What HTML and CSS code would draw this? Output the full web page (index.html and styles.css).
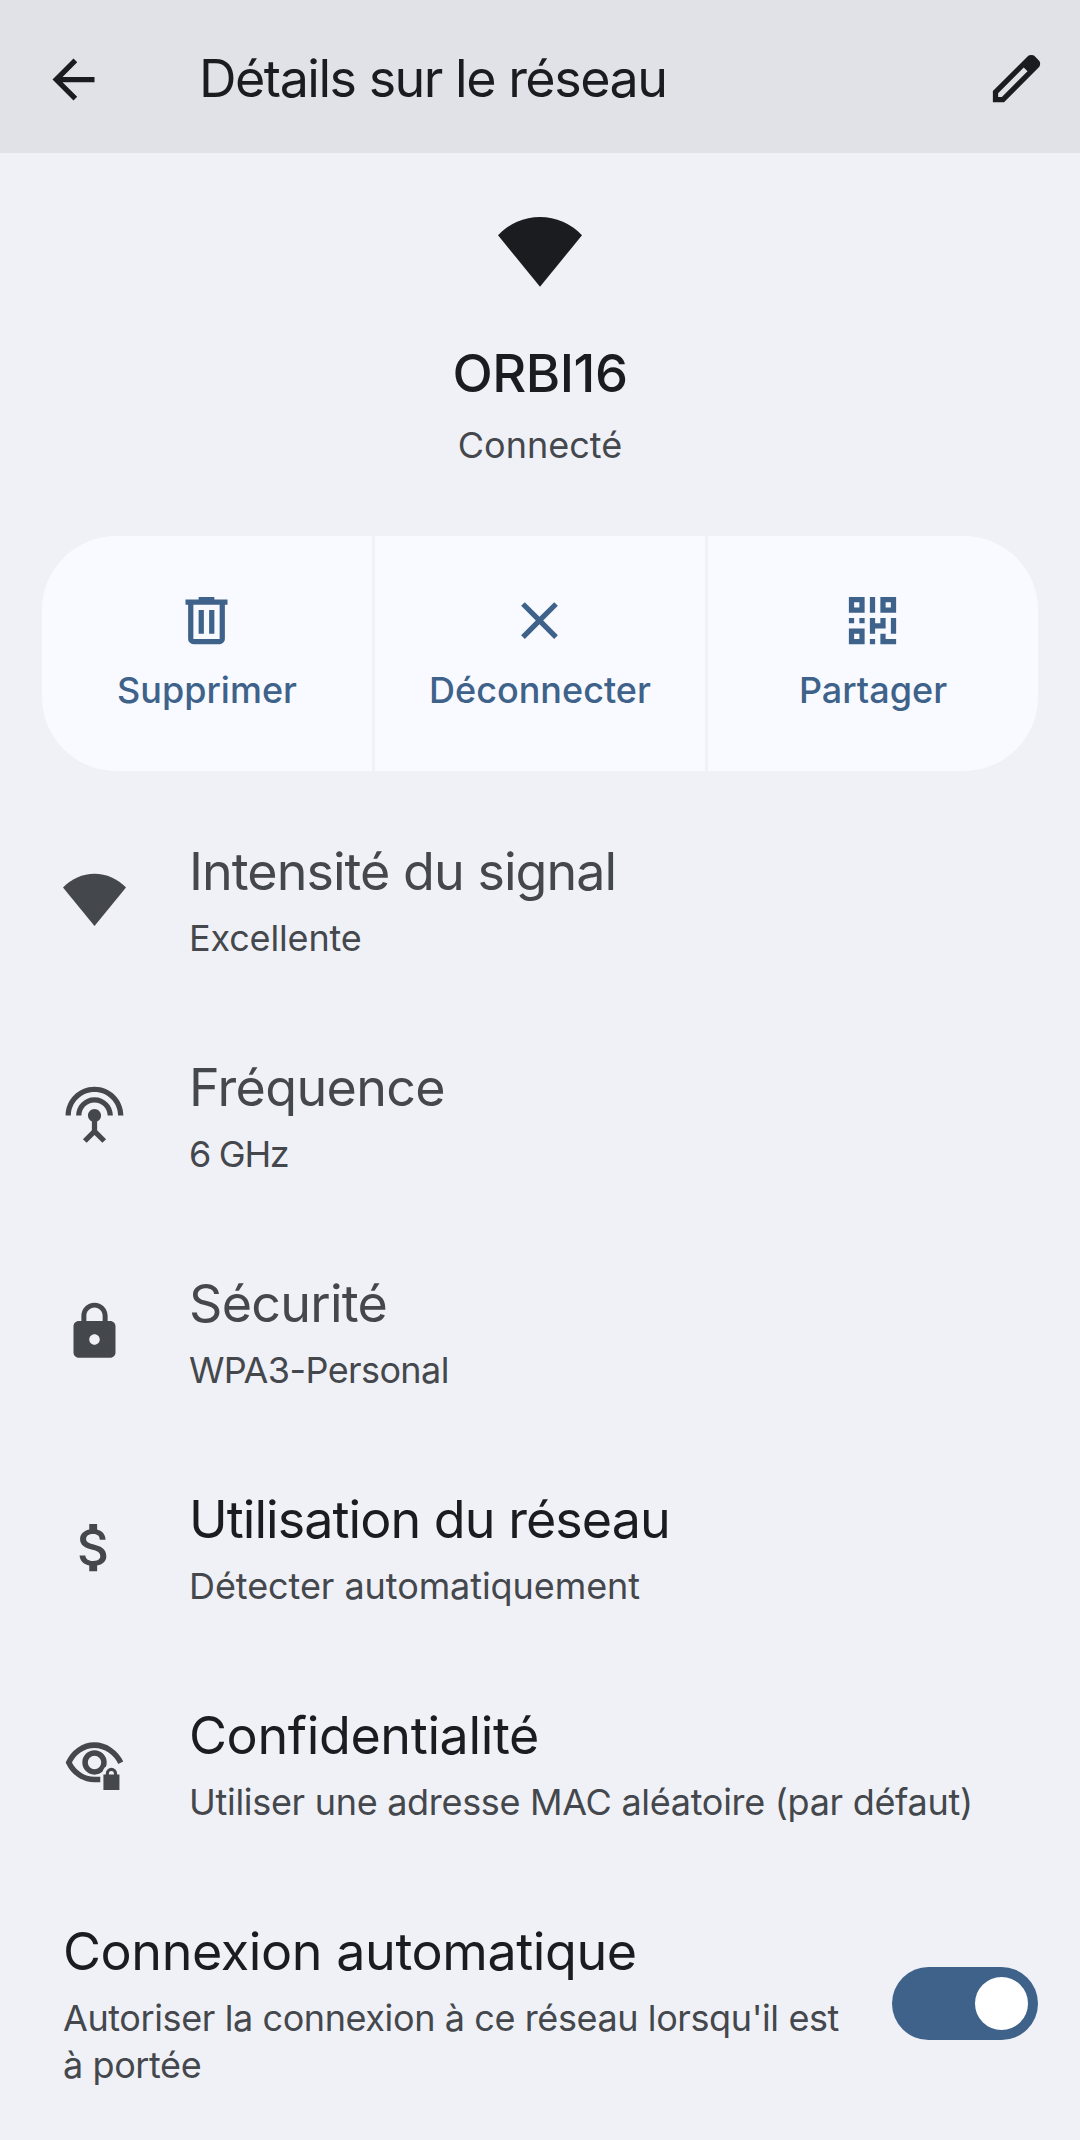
FILE: index.html
```html
<!DOCTYPE html>
<html lang="fr">
<head>
<meta charset="utf-8">
<title>Détails sur le réseau</title>
<link rel="stylesheet" href="styles.css">
</head>
<body>
<header class="app-bar">
  <svg class="icon" viewBox="0 0 24 24"><path d="M20 11H7.83l5.59-5.59L12 4l-8 8 8 8 1.41-1.41L7.83 13H20z"/></svg>
  <h1 class="title app-bar-title">Détails sur le réseau</h1>
  <svg class="icon icon-edit" viewBox="0 0 24 24"><path d="M5 19h1.425L16.2 9.225 14.775 7.8 5 17.575Zm-2 2v-4.25L16.2 3.575q.3-.275.663-.425.362-.15.762-.15t.775.15.65.45L20.425 5q.3.275.438.65.137.375.137.75 0 .4-.137.763-.138.362-.438.662L7.25 21Z"/></svg>
</header>
<main>
  <section class="hero">
    <svg class="hero-icon" viewBox="0 0 24 24"><path d="M0 7.24A16.4 16.4 0 0 1 24 7.24L12 21.9z"/></svg>
    <h2 class="network-name">ORBI16</h2>
    <p class="summary network-state">Connecté</p>
  </section>

  <nav class="actions">
    <button class="action">
      <svg class="icon" viewBox="0 0 24 24"><path fill-rule="evenodd" d="M9 3h6v1h5v2h-1v13a2 2 0 0 1-2 2H7a2 2 0 0 1-2-2V6H4V4h5zM7 6v13h10V6zM9 8h2v9H9zM13 8h2v9h-2z"/></svg>
      <span class="action-label">Supprimer</span>
    </button>
    <button class="action">
      <svg class="icon" viewBox="0 0 24 24"><path d="M19 6.41 17.59 5 12 10.59 6.41 5 5 6.41 10.59 12 5 17.59 6.41 19 12 13.41 17.59 19 19 17.59 13.41 12z"/></svg>
      <span class="action-label">Déconnecter</span>
    </button>
    <button class="action">
      <svg class="icon" viewBox="0 0 24 24"><path fill-rule="evenodd" d="M3 3h6v6H3zM5 5v2h2V5zM11 3h2v6h-2zM15 3h6v6h-6zM17 5v2h2V5zM3 11h2v2H3zM7 11h2v2H7zM11 11h2v2h2v-2h2v4h-4v2h-2zM19 11h2v6h-2zM3 15h6v6H3zM5 17v2h2v-2zM11 19h2v2h-2zM15 17h2v2h4v2h-6z"/></svg>
      <span class="action-label">Partager</span>
    </button>
  </nav>

  <section class="list">
    <div class="item item-signal">
      <svg class="icon" viewBox="0 0 24 24"><path d="M0 7.44A16.4 16.4 0 0 1 24 7.44L12 22.1z"/></svg>
      <div class="item-text">
        <h3 class="title muted">Intensité du signal</h3>
        <p class="summary">Excellente</p>
      </div>
    </div>
    <div class="item item-frequency">
      <svg class="icon" viewBox="0 0 24 24"><path d="M12 5c-3.87 0-7 3.13-7 7h2c0-2.76 2.24-5 5-5s5 2.24 5 5h2c0-3.87-3.13-7-7-7zm1 9.29c.88-.39 1.5-1.26 1.5-2.29 0-1.38-1.12-2.5-2.5-2.5S9.5 10.62 9.5 12c0 1.02.62 1.9 1.5 2.29v3.3L7.59 21 9 22.41l3-3 3 3L16.41 21 13 17.59v-3.3zM12 1C5.93 1 1 5.93 1 12h2c0-4.97 4.03-9 9-9s9 4.03 9 9h2c0-6.07-4.93-11-11-11z"/></svg>
      <div class="item-text">
        <h3 class="title muted">Fréquence</h3>
        <p class="summary">6 GHz</p>
      </div>
    </div>
    <div class="item item-security">
      <svg class="icon" viewBox="0 0 24 24"><path d="M18 8h-1V6c0-2.76-2.24-5-5-5S7 3.24 7 6v2H6c-1.1 0-2 .9-2 2v10c0 1.1.9 2 2 2h12c1.1 0 2-.9 2-2V10c0-1.1-.9-2-2-2zm-6 9c-1.1 0-2-.9-2-2s.9-2 2-2 2 .9 2 2-.9 2-2 2zm3.1-9H8.9V6c0-1.71 1.39-3.1 3.1-3.1 1.71 0 3.1 1.39 3.1 3.1v2z"/></svg>
      <div class="item-text">
        <h3 class="title muted">Sécurité</h3>
        <p class="summary">WPA3-Personal</p>
      </div>
    </div>
    <div class="item item-usage">
      <svg class="icon" viewBox="0 0 24 24"><path d="M11.8 10.9c-2.27-.59-3-1.2-3-2.15 0-1.09 1.01-1.85 2.7-1.85 1.78 0 2.44.85 2.5 2.1h2.21c-.07-1.72-1.12-3.3-3.21-3.81V3h-3v2.16c-1.94.42-3.5 1.68-3.5 3.61 0 2.31 1.91 3.46 4.7 4.13 2.5.6 3 1.48 3 2.41 0 .69-.49 1.79-2.7 1.79-2.06 0-2.87-.92-2.98-2.1h-2.2c.12 2.19 1.76 3.42 3.68 3.83V21h3v-2.15c1.95-.37 3.5-1.5 3.5-3.55 0-2.84-2.43-3.81-4.7-4.4z"/></svg>
      <div class="item-text">
        <h3 class="title">Utilisation du réseau</h3>
        <p class="summary">Détecter automatiquement</p>
      </div>
    </div>
    <div class="item item-privacy">
      <svg class="icon" viewBox="0 0 24 24">
        <path class="stroke" d="M22 11.7C20.2 7.9 16.3 5 12 5S4 7.8 2.2 11.6C4 15.4 7.7 18.1 12 18.1h2.2"/>
        <circle class="stroke" cx="12" cy="11.6" r="3.6"/>
        <circle class="knockout" cx="18.4" cy="16" r="3.5"/>
        <path fill-rule="evenodd" d="M15.4 16.2h.9v-.4a2.15 2.15 0 0 1 4.3 0v.4h.9v5.9h-6.1zM17.5 16.2h1.9v-.4a.95.95 0 0 0-1.9 0z"/>
      </svg>
      <div class="item-text">
        <h3 class="title">Confidentialité</h3>
        <p class="summary">Utiliser une adresse MAC aléatoire (par défaut)</p>
      </div>
    </div>
    <div class="item item-auto">
      <div class="item-text">
        <h3 class="title">Connexion automatique</h3>
        <p class="summary">Autoriser la connexion à ce réseau lorsqu'il est <span class="auto-end">à portée</span></p>
      </div>
      <div class="switch" role="switch" aria-checked="true"><span class="thumb"></span></div>
    </div>
  </section>
</main>
</body>
</html>
```
FILE: styles.css
```css
* { box-sizing: border-box; }

body {
  margin: 0;
  height: 2140px;
  overflow: hidden;
  background: #eff1f7;
  color: #1a1c20;
  font-family: Inter, Roboto, sans-serif;
}

h1, h2, h3, p { margin: 0; font-weight: 400; }

.icon {
  width: 63px;
  height: 63px;
  flex: none;
  fill: currentColor;
}

.title { font-size: 52px; line-height: 64px; white-space: nowrap; }
.muted { color: #44474c; }

.summary {
  font-size: 36px;
  line-height: 47px;
  color: #44474c;
}

/* App bar */
.app-bar {
  display: flex;
  align-items: flex-start;
  height: 153px;
  padding: 48px 32px 0 42px;
  background: #e1e2e7;
}
.app-bar-title {
  flex: 1;
  margin: -1px 0 0 94px;
  letter-spacing: -1.49px;
}
.icon-edit { margin-top: -1px; }

/* Network header */
.hero {
  display: flex;
  flex-direction: column;
  align-items: center;
  padding-top: 57px;
}
.hero-icon { width: 84px; height: 84px; fill: #1a1c20; }
.network-name {
  margin-top: 47px;
  font-size: 52.5px;
  font-weight: 500;
  line-height: 64px;
  letter-spacing: -0.5px;
}
.network-state { margin-top: 17px; }

/* Action buttons */
.actions {
  display: grid;
  grid-template-columns: repeat(3, 1fr);
  gap: 3px;
  height: 235px;
  margin: 67px 42px 20px;
  border-radius: 74px;
  overflow: hidden;
}
.action {
  display: flex;
  flex-direction: column;
  align-items: center;
  padding: 53px 0 0;
  border: 0;
  background: #f8faff;
  color: #3e628a;
  font-family: inherit;
}
.action .icon { margin-right: 2px; }
.action-label {
  margin-top: 15px;
  font-size: 36px;
  font-weight: 500;
  line-height: 47px;
}

/* Preference list */
.item {
  display: flex;
  align-items: center;
  height: 216px;
  padding: 0 42px 0 63px;
}
.item > .icon { color: #44474c; }
.item-text {
  display: flex;
  flex-direction: column;
  flex: 1;
  gap: 11px;
  padding-top: 3px;
}
.icon + .item-text { margin-left: 63px; }
.stroke { fill: none; stroke: currentColor; stroke-width: 2.1; }
.knockout { fill: #eff1f7; }

.item-signal .title { letter-spacing: -0.96px; }
.item-signal .summary { letter-spacing: -0.15px; }
.item-frequency .title { letter-spacing: -0.66px; }
.item-frequency .summary { letter-spacing: -1.3px; }
.item-security .title { letter-spacing: -0.72px; }
.item-security .summary { letter-spacing: -0.6px; }
.item-usage .title { letter-spacing: -0.95px; }
.item-usage .summary { letter-spacing: -0.07px; }
.item-privacy .title { letter-spacing: -0.36px; }
.item-privacy .summary { letter-spacing: -0.3px; }
.item-auto .title { letter-spacing: -0.4px; }
.item-auto .summary { letter-spacing: -0.4px; }
.auto-end { display: inline-block; }

.item-auto {
  align-items: flex-start;
  height: auto;
  gap: 42px;
  padding-top: 46px;
}

/* Switch */
.switch {
  display: flex;
  justify-content: flex-end;
  align-items: center;
  flex: none;
  width: 146px;
  height: 73px;
  margin-top: 50px;
  padding-right: 10px;
  border-radius: 37px;
  background: #3e628a;
}
.thumb {
  width: 53px;
  height: 53px;
  border-radius: 50%;
  background: #fff;
}
```
